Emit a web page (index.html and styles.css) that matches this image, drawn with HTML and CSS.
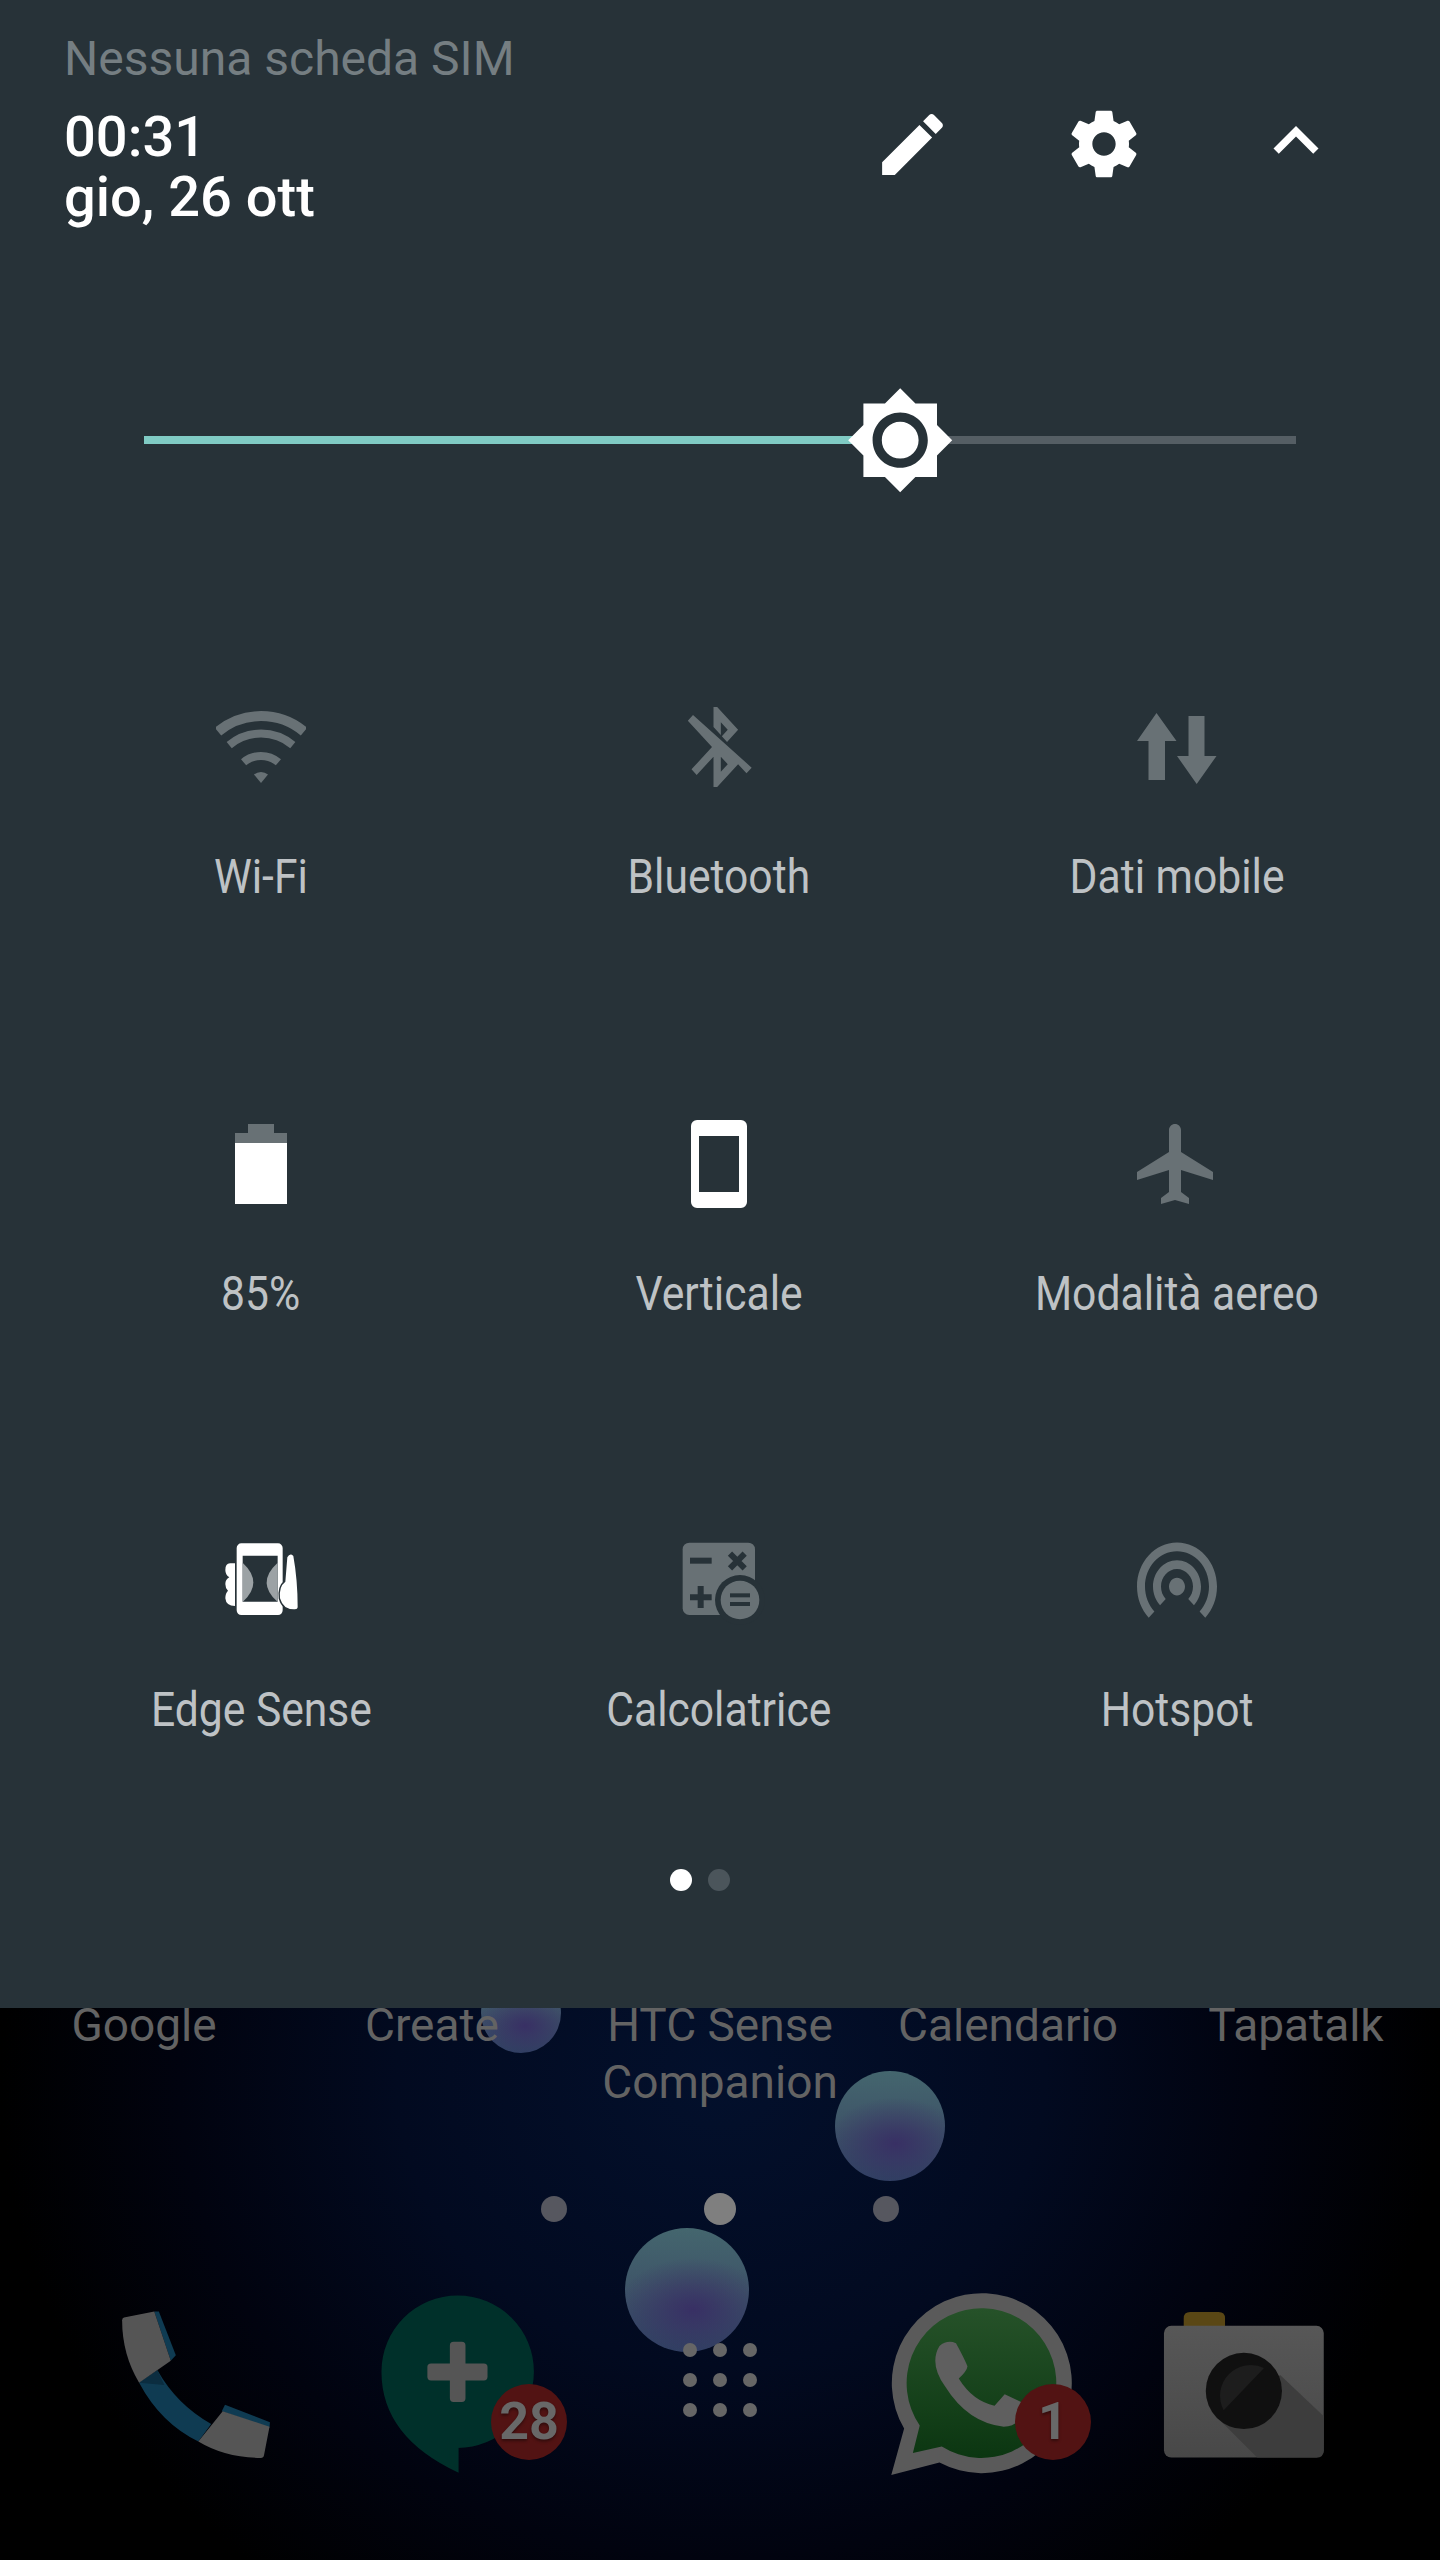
FILE: index.html
```html
<!DOCTYPE html>
<html lang="it">

<head>
    <meta charset="UTF-8">
    <meta name="viewport" content="width=device-width, initial-scale=1.0">
    <title>Impostazioni rapide</title>
    <link rel="stylesheet" href="styles.css">
</head>

<body>
    <div class="screen">
        <!-- Quick settings panel -->
        <section class="panel">
            <div class="status">Nessuna scheda SIM</div>
            <div class="header-row">
                <div class="clock">
                    <div>00:31</div>
                    <div>gio, 26 ott</div>
                </div>
                <div class="actions">
                    <div class="action">
                        <svg class="icon-edit" viewBox="0 0 24 24"><path d="M3 17.25V21h3.75L17.81 9.94l-3.75-3.75L3 17.25zM20.71 7.04c.39-.39.39-1.02 0-1.41l-2.34-2.34c-.39-.39-1.02-.39-1.41 0l-1.83 1.83 3.75 3.75 1.83-1.83z"/></svg>
                    </div>
                    <div class="action">
                        <svg class="icon-gear" viewBox="0 0 24 24"><path d="M19.43 12.98c.04-.32.07-.64.07-.98s-.03-.66-.07-.98l2.11-1.65c.19-.15.24-.42.12-.64l-2-3.46c-.12-.22-.39-.3-.61-.22l-2.49 1c-.52-.4-1.08-.73-1.69-.98l-.38-2.65C14.46 2.18 14.25 2 14 2h-4c-.25 0-.46.18-.49.42l-.38 2.65c-.61.25-1.17.59-1.69.98l-2.49-1c-.23-.09-.49 0-.61.22l-2 3.46c-.13.22-.07.49.12.64l2.11 1.65c-.04.32-.07.65-.07.98s.03.66.07.98l-2.11 1.65c-.19.15-.24.42-.12.64l2 3.46c.12.22.39.3.61.22l2.49-1c.52.4 1.08.73 1.69.98l.38 2.65c.03.24.24.42.49.42h4c.25 0 .46-.18.49-.42l.38-2.65c.61-.25 1.17-.59 1.69-.98l2.49 1c.23.09.49 0 .61-.22l2-3.46c.12-.22.07-.49-.12-.64l-2.11-1.65zM12 15.5c-1.93 0-3.5-1.57-3.5-3.5s1.57-3.5 3.5-3.5 3.5 1.57 3.5 3.5-1.57 3.5-3.5 3.5z"/></svg>
                    </div>
                    <div class="action">
                        <svg class="icon-chevron" viewBox="0 0 24 24"><path d="M7.41 15.41L12 10.83l4.59 4.58L18 14l-6-6-6 6z"/></svg>
                    </div>
                </div>
            </div>

            <!-- Brightness -->
            <div class="slider">
                <div class="slider-fill"></div>
                <svg class="slider-thumb" viewBox="0 0 24 24">
                    <circle class="cut" cx="12" cy="12" r="7"/>
                    <path d="M20 8.69V4h-4.69L12 .69 8.69 4H4v4.69L.69 12 4 15.31V20h4.69L12 23.31 15.31 20H20v-4.69L23.31 12 20 8.69zM12 18c-3.31 0-6-2.69-6-6s2.69-6 6-6 6 2.69 6 6-2.69 6-6 6zm0-10c-2.21 0-4 1.79-4 4s1.79 4 4 4 4-1.79 4-4-1.79-4-4-4z"/>
                </svg>
            </div>

            <!-- Tiles -->
            <div class="tiles">
                <div class="tile">
                    <div class="tile-icon">
                        <svg class="icon-wifi" viewBox="0 0 90 72">
                            <path class="arc arc-lg" d="M2 20.7A67 67 0 0 1 88 20.7"/>
                            <path class="arc" d="M13.2 34.1A49.5 49.5 0 0 1 76.8 34.1"/>
                            <path class="arc" d="M27.6 51.3A27 27 0 0 1 62.4 51.3"/>
                            <path class="dim" d="M38 63.6A11 11 0 0 1 52 63.6L45 72z"/>
                        </svg>
                    </div>
                    <div class="tile-label">Wi-Fi</div>
                </div>
                <div class="tile">
                    <div class="tile-icon">
                        <svg class="icon-bluetooth" viewBox="0.5 0 24 24" preserveAspectRatio="none"><path class="dim" d="M13 5.83l1.88 1.88-1.6 1.6 1.41 1.41 3.02-3.02L12 2h-1v5.03l2 2v-3.2zM5.41 4L4 5.41 10.59 12 5 17.59 6.41 19 11 14.41V22h1l5.71-5.71 2.29 2.29 1.41-1.41L5.41 4zM13 18.17v-3.76l1.88 1.88L13 18.17z"/></svg>
                    </div>
                    <div class="tile-label">Bluetooth</div>
                </div>
                <div class="tile">
                    <div class="tile-icon">
                        <svg class="icon-data" viewBox="0 0 80 72">
                            <path class="dim" d="M19.5 0L39.5 28H28V67H11.5V28H0z"/>
                            <path class="dim" d="M51.5 3H67.5V43H79.5L59.7 71L40 43H51.5z"/>
                        </svg>
                    </div>
                    <div class="tile-label">Dati mobile</div>
                </div>

                <div class="tile">
                    <div class="tile-icon">
                        <svg class="icon-battery" viewBox="0 0 52 80">
                            <path class="dim" d="M13 0H39V9H52V19H0V9H13z"/>
                            <rect y="19" width="52" height="61"/>
                        </svg>
                    </div>
                    <div class="tile-label">85%</div>
                </div>
                <div class="tile">
                    <div class="tile-icon">
                        <svg class="icon-rotate" viewBox="0 0 56 88">
                            <path fill-rule="evenodd" d="M6 0H50A6 6 0 0 1 56 6V82A6 6 0 0 1 50 88H6A6 6 0 0 1 0 82V6A6 6 0 0 1 6 0zM8 16V72H48V16z"/>
                        </svg>
                    </div>
                    <div class="tile-label">Verticale</div>
                </div>
                <div class="tile">
                    <div class="tile-icon">
                        <svg class="icon-96" viewBox="0 0 24 24"><path class="dim" d="M21 16v-2l-8-5V3.5c0-.83-.67-1.5-1.5-1.5S10 2.67 10 3.5V9l-8 5v2l8-2.5V19l-2 1.5V22l3.5-1 3.5 1v-1.5L13 19v-5.5l8 2.5z"/></svg>
                    </div>
                    <div class="tile-label">Modalità aereo</div>
                </div>

                <div class="tile">
                    <div class="tile-icon">
                        <svg class="icon-box" viewBox="-27 0 420 360">
                            <path fill-rule="evenodd" d="M124 70H234A14 14 0 0 1 248 84V271A14 14 0 0 1 234 285H124A14 14 0 0 1 110 271V84A14 14 0 0 1 124 70zM128 107V245H233V107z"/>
                            <path class="soft" d="M128 128Q192 188 128 246z"/>
                            <path class="soft" d="M233 128Q167 188 233 246z"/>
                            <path d="M105 130H90Q76 130 76 150Q76 165 88 172Q76 178 76 192Q76 205 84 212Q76 220 76 235Q78 258 105 258z"/>
                            <path class="hand" d="M262 112Q270 98 280 108Q293 180 293 262Q293 268 285 268Q250 270 240 235Q236 200 256 185z"/>
                        </svg>
                    </div>
                    <div class="tile-label">Edge Sense</div>
                </div>
                <div class="tile">
                    <div class="tile-icon">
                        <svg class="icon-box" viewBox="-3 0 420 360">
                            <rect class="dim" x="98" y="68" width="217" height="217" rx="20"/>
                            <circle class="cut" cx="270" cy="240" r="75"/>
                            <circle class="dim" cx="270" cy="240" r="58"/>
                            <rect class="cut" x="120" y="113" width="65" height="18"/>
                            <path class="cut-line" d="M240 101L284 145M284 101L240 145"/>
                            <path class="cut" d="M143 198H161V223H185V241H161V264H143V241H120V223H143z"/>
                            <rect class="cut" x="240" y="220" width="60" height="12"/>
                            <rect class="cut" x="240" y="246" width="60" height="12"/>
                        </svg>
                    </div>
                    <div class="tile-label">Calcolatrice</div>
                </div>
                <div class="tile">
                    <div class="tile-icon">
                        <svg class="icon-hotspot" viewBox="0 -0.5 24 24" preserveAspectRatio="none"><path class="dim" d="M12 11c-1.1 0-2 .9-2 2 0 .55.23 1.05.59 1.41.36.36.86.59 1.41.59.55 0 1.05-.23 1.41-.59.36-.36.59-.86.59-1.41 0-1.1-.9-2-2-2zm6 2c0-3.31-2.69-6-6-6s-6 2.69-6 6c0 1.65.67 3.15 1.76 4.24l1.42-1.42C8.45 15.1 8 14.11 8 13c0-2.21 1.79-4 4-4s4 1.79 4 4c0 1.11-.45 2.1-1.18 2.82l1.42 1.42C17.33 16.15 18 14.65 18 13zM12 3C6.48 3 2 7.48 2 13c0 2.76 1.12 5.26 2.93 7.07l1.42-1.42C4.9 17.21 4 15.21 4 13c0-4.42 3.58-8 8-8s8 3.58 8 8c0 2.21-.9 4.21-2.35 5.65l1.42 1.42C20.88 18.26 22 15.76 22 13c0-5.52-4.48-10-10-10z"/></svg>
                    </div>
                    <div class="tile-label">Hotspot</div>
                </div>
            </div>

            <div class="pager">
                <span class="pager-dot active"></span>
                <span class="pager-dot"></span>
            </div>
        </section>

        <!-- Dimmed home screen behind the panel -->
        <section class="home">
            <span class="orb orb-one"></span>
            <span class="orb orb-two"></span>
            <span class="orb orb-three"></span>
            <span class="page-dot page-left"></span>
            <span class="page-dot page-mid"></span>
            <span class="page-dot page-right"></span>

            <div class="shortcuts">
                <div>Google</div>
                <div>Create</div>
                <div>HTC Sense<br>Companion</div>
                <div>Calendario</div>
                <div>Tapatalk</div>
            </div>

            <div class="dock">
                <div class="dock-item">
                    <svg viewBox="141.6 914.8 570.6 570.6">
                        <path class="ph-blue" d="M303 1182L343 1155Q385 1230 460 1272L432 1310Q350 1270 303 1182z"/>
                        <path class="ph-shade" d="M303 1182L343 1155L358 1187z"/>
                        <path class="ph-blue" d="M336 1027L346 1027L383 1122L372 1134z"/>
                        <path class="ph-blue" d="M490 1230L588 1268L587 1280L483 1244z"/>
                        <path class="ph-grey" d="M270 1040L336 1027L372 1134L303 1182Q266 1120 266 1046Q266 1041 270 1040z"/>
                        <path class="ph-grey" d="M485 1244L587 1278L575 1340Q574 1346 568 1346Q490 1345 432 1310z"/>
                    </svg>
                </div>
                <div class="dock-item">
                    <svg viewBox="713.4 914.8 570.6 570.6">
                        <path class="chat" d="M998 992A166 166 0 0 1 998 1324H1000V1378Q832 1300 832 1158A166 166 0 0 1 998 992z"/>
                        <path class="plus" d="M989 1093H1007Q1015 1093 1015 1101V1140H1055Q1063 1140 1063 1148V1169Q1063 1177 1055 1177H1015V1216Q1015 1224 1007 1224H989Q981 1224 981 1216V1177H940Q932 1177 932 1169V1148Q932 1140 940 1140H981V1101Q981 1093 989 1093z"/>
                    </svg>
                    <span class="badge">28</span>
                </div>
                <div class="dock-item">
                    <div class="apps-grid">
                        <span></span><span></span><span></span>
                        <span></span><span></span><span></span>
                        <span></span><span></span><span></span>
                    </div>
                </div>
                <div class="dock-item">
                    <svg viewBox="285.3 914.8 570.6 570.6">
                        <defs>
                            <linearGradient id="waGreen" x1="0" y1="0" x2="0" y2="1">
                                <stop offset="0" stop-color="#265229"/>
                                <stop offset="1" stop-color="#0b3611"/>
                            </linearGradient>
                        </defs>
                        <path class="wa-ring" d="M373 1383L401 1282A196 196 0 1 1 478 1356z"/>
                        <path fill="url(#waGreen)" d="M420 1335L435 1275A163 163 0 1 1 483 1321z"/>
                        <path class="wa-phone" d="M478 1102Q495 1088 514 1096Q530 1125 539 1146Q538 1156 520 1173Q550 1222 598 1232L620 1207L660 1226Q660 1278 618 1278Q540 1270 490 1190Q455 1140 478 1102z"/>
                    </svg>
                    <span class="badge">1</span>
                </div>
                <div class="dock-item">
                    <svg viewBox="856 914.8 570.6 570.6">
                        <defs>
                            <linearGradient id="camBody" x1="0" y1="0" x2="0" y2="1">
                                <stop offset="0" stop-color="#575757"/>
                                <stop offset="1" stop-color="#484848"/>
                            </linearGradient>
                        </defs>
                        <path class="cam-nub" d="M1024 1028H1086Q1100 1028 1100 1042V1065H1010V1042Q1010 1028 1024 1028z"/>
                        <rect fill="url(#camBody)" x="967" y="1058" width="348" height="287" rx="16"/>
                        <path class="cam-shadow" d="M1220 1165L1315 1255V1329Q1315 1345 1299 1345H1170L1095 1270z"/>
                        <circle class="cam-lens" cx="1141" cy="1200" r="83"/>
                        <path class="cam-glass" d="M1185 1150A67 67 0 0 0 1097 1242z"/>
                    </svg>
                </div>
            </div>
        </section>
    </div>
</body>

</html>
```

FILE: styles.css
```css
* {
    box-sizing: border-box;
}

body {
    margin: 0;
    font-family: 'Roboto', sans-serif;
    background-color: #000;
}

.screen {
    width: 1440px;
    height: 2560px;
    overflow: hidden;
}

svg {
    display: block;
    fill: #fff;
}

.dim {
    fill: #687175;
}

/* Panel */

.panel {
    position: relative;
    z-index: 2;
    height: 2008px;
    padding-top: 27px;
    background-color: #273238;
}

.status {
    padding-left: 64px;
    font-size: 48px;
    line-height: 64px;
    color: #757e82;
}

.header-row {
    display: flex;
    justify-content: space-between;
    margin-top: 16px;
    padding: 0 48px 0 64px;
}

.clock {
    font-size: 56px;
    line-height: 60px;
    font-weight: 500;
    color: #fff;
}

.actions {
    display: flex;
    align-items: center;
    height: 74px;
}

.action {
    display: flex;
    justify-content: center;
    width: 192px;
}

.icon-edit {
    width: 81px;
    height: 81px;
}

.icon-gear {
    width: 80px;
    height: 80px;
}

.icon-chevron {
    width: 90px;
    height: 90px;
    margin-top: -6px;
}

/* Brightness slider */

.slider {
    position: relative;
    height: 8px;
    margin: 209px 144px 0;
    background-color: #555e64;
}

.slider-fill {
    width: 756px;
    height: 8px;
    background-color: #80cbc4;
}

.slider-thumb {
    position: absolute;
    left: 700.8px;
    top: -51.2px;
    width: 110.4px;
    height: 110.4px;
}

/* Tiles */

.tiles {
    display: grid;
    grid-template-columns: repeat(3, 458px);
    row-gap: 194.5px;
    margin-top: 243px;
    padding-left: 32px;
}

.tile {
    display: flex;
    flex-direction: column;
    align-items: center;
}

.tile-icon {
    display: flex;
    align-items: center;
    justify-content: center;
    height: 120px;
}

.tile-label {
    margin-top: 38px;
    font-size: 48px;
    line-height: 64px;
    white-space: nowrap;
    color: #bec2c5;
    /* the device font is narrower than Roboto */
    transform: scaleX(0.888);
}

.icon-96 {
    width: 96px;
    height: 96px;
}

.icon-bluetooth {
    width: 88px;
    height: 96px;
}

.icon-wifi {
    width: 90px;
    height: 72px;
}

.icon-data {
    width: 80px;
    height: 72px;
    margin-top: 3px;
}

.icon-battery {
    width: 52px;
    height: 80px;
}

.icon-rotate {
    width: 56px;
    height: 88px;
}

.icon-box {
    width: 140px;
    height: 120px;
}

.icon-hotspot {
    width: 96px;
    height: 106px;
}

.arc {
    fill: none;
    stroke: #687175;
    stroke-width: 8;
}

.arc-lg {
    stroke-width: 10;
}

.soft {
    fill: #9ca2a5;
}

.hand {
    stroke: #273238;
    stroke-width: 8;
    paint-order: stroke;
}

.cut {
    fill: #273238;
}

.cut-line {
    fill: none;
    stroke: #273238;
    stroke-width: 18;
}

/* Pager */

.pager {
    display: flex;
    justify-content: center;
    gap: 16px;
    margin-top: 127px;
    padding-right: 40px;
}

.pager-dot {
    width: 22px;
    height: 22px;
    border-radius: 50%;
    background-color: #4b555b;
}

.pager-dot.active {
    background-color: #fff;
}

/* Home screen */

.home {
    position: relative;
    height: 552px;
    overflow: hidden;
    background: radial-gradient(ellipse 720px 640px at 720px 70px, #03102c 0%, #020a20 45%, #01030f 75%, #000 100%);
}

.orb {
    position: absolute;
    border-radius: 50%;
    background:
        radial-gradient(ellipse 62% 42% at 55% 66%, rgba(56, 46, 100, 0.95) 0%, rgba(56, 46, 100, 0) 100%),
        linear-gradient(#44666e, #3e5468 50%, #2f4262);
}

.orb-one {
    left: 481px;
    top: -35px;
    width: 80px;
    height: 80px;
}

.orb-two {
    left: 835px;
    top: 63px;
    width: 110px;
    height: 110px;
}

.orb-three {
    left: 625px;
    top: 220px;
    width: 124px;
    height: 124px;
}

.page-dot {
    position: absolute;
    top: 188px;
    width: 26px;
    height: 26px;
    border-radius: 50%;
    background-color: #56575f;
}

.page-left {
    left: 541px;
}

.page-mid {
    left: 704px;
    top: 185px;
    width: 32px;
    height: 32px;
    background-color: #7f7f7f;
}

.page-right {
    left: 873px;
}

.shortcuts {
    position: relative;
    display: grid;
    grid-template-columns: repeat(5, 288px);
    margin-top: -11px;
    font-size: 46px;
    line-height: 57px;
    text-align: center;
    color: #636363;
}

.dock {
    position: relative;
    display: grid;
    grid-template-columns: repeat(5, 262px);
    margin-top: 149px;
    padding-left: 65px;
}

.dock-item {
    position: relative;
    height: 262px;
}

.dock-item svg {
    width: 262px;
    height: 262px;
}

.badge {
    position: absolute;
    left: 164px;
    top: 124px;
    width: 76px;
    height: 76px;
    border-radius: 50%;
    background-color: #521313;
    font-size: 52px;
    line-height: 76px;
    font-weight: 700;
    text-align: center;
    color: #686868;
    text-shadow: 0 2px 3px rgba(0, 0, 0, 0.4);
}

.apps-grid {
    display: grid;
    grid-template-columns: repeat(3, 14px);
    gap: 16px;
    justify-content: center;
    padding-top: 83px;
}

.apps-grid span {
    height: 14px;
    border-radius: 50%;
    background-color: #666;
}

.ph-grey {
    fill: #555;
}

.ph-blue {
    fill: #0f3b52;
}

.ph-shade {
    fill: #0b2d40;
}

.chat {
    fill: #00302a;
}

.plus {
    fill: #555;
}

.wa-ring {
    fill: #5a5a5a;
}

.wa-phone {
    fill: #5f5f5f;
}

.cam-nub {
    fill: #5a4715;
}

.cam-shadow {
    fill: #3d3d3d;
}

.cam-lens {
    fill: #101010;
}

.cam-glass {
    fill: #1d1d1d;
}
```
